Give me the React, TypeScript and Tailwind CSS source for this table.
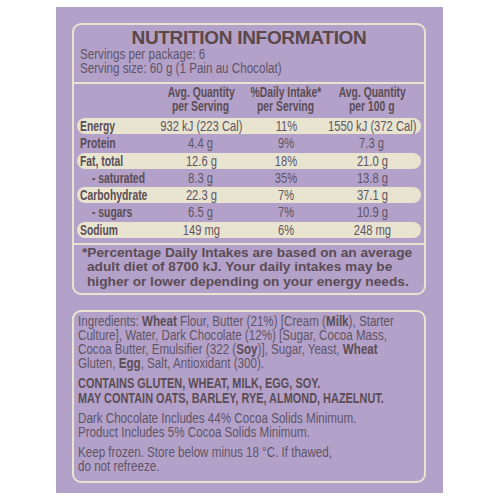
import React from "react";

const sans = { fontFamily: '"Liberation Sans", Arial, sans-serif' };

type Row = { label: string; a: string; b: string; c: string; hl?: boolean; sub?: boolean };
const rows: Row[] = [
  { label: "Energy", a: "932 kJ (223 Cal)", b: "11%", c: "1550 kJ (372 Cal)", hl: true },
  { label: "Protein", a: "4.4 g", b: "9%", c: "7.3 g" },
  { label: "Fat, total", a: "12.6 g", b: "18%", c: "21.0 g", hl: true },
  { label: "- saturated", a: "8.3 g", b: "35%", c: "13.8 g", sub: true },
  { label: "Carbohydrate", a: "22.3 g", b: "7%", c: "37.1 g", hl: true },
  { label: "- sugars", a: "6.5 g", b: "7%", c: "10.9 g", sub: true },
  { label: "Sodium", a: "149 mg", b: "6%", c: "248 mg", hl: true },
];

/* condensed regular text, left aligned */
function NL({ children, className = "" }: { children: React.ReactNode; className?: string }) {
  return (
    <div className={`whitespace-nowrap origin-left scale-x-[0.83] ${className}`}>{children}</div>
  );
}
/* condensed bold text, left aligned */
function BL({ children, className = "" }: { children: React.ReactNode; className?: string }) {
  return (
    <div className={`whitespace-nowrap origin-left scale-x-[0.78] font-bold text-[#5b4d55] ${className}`}>{children}</div>
  );
}
/* centered condensed text */
function NC({ children }: { children: React.ReactNode }) {
  return (
    <div className="flex justify-center">
      <span className="inline-block whitespace-nowrap scale-x-[0.8]">{children}</span>
    </div>
  );
}
function BC({ children }: { children: React.ReactNode }) {
  return (
    <div className="flex justify-center">
      <span className="inline-block whitespace-nowrap scale-x-[0.74] font-bold text-[#5b4d55]">{children}</span>
    </div>
  );
}

const W = ({ children }: { children: React.ReactNode }) => (
  <b className="text-[#5b4d55]">{children}</b>
);

export default function App() {
  return (
    <div className="w-[500px] h-[500px] bg-white pt-[7px] pl-[56px]" style={sans}>
      <div className="w-[387px] h-[486px] bg-[#b4a1c9] pt-[16px] pl-[16px] text-[#5e5566]">
        {/* Nutrition box */}
        <div className="w-[354px] h-[272px] rounded-[9px] border-2 border-[#e9e4cf] overflow-hidden">
          <div className="text-center font-bold text-[19px] leading-[18px] text-[#5b4848] pt-[4px] tracking-[-0.3px]">
            NUTRITION INFORMATION
          </div>
          <div className="pl-[6px] text-[14px] leading-[14px]">
            <NL>Servings per package: 6</NL>
            <NL>Serving size: 60 g (1 Pain au Chocolat)</NL>
          </div>
          <div className="h-[2px] bg-[#e9e4cf] mt-[7px]" />
          <div className="px-[3px]">
            <div className="grid grid-cols-[82px_84px_86px_86px] pt-[2px] text-[14px] leading-[13.5px]">
              <div />
              <div>
                <BC>Avg. Quantity</BC>
                <BC>per Serving</BC>
              </div>
              <div>
                <BC>%Daily Intake*</BC>
                <BC>per Serving</BC>
              </div>
              <div>
                <BC>Avg. Quantity</BC>
                <BC>per 100 g</BC>
              </div>
            </div>
            <div className="mt-[5px] flex flex-col gap-[1.3px]">
              {rows.map((r) => (
                <div
                  key={r.label}
                  className={`grid grid-cols-[82px_84px_86px_86px] h-[16px] items-center rounded-full text-[14px] leading-[16px] ${
                    r.hl ? "bg-[#e8e4d0]" : ""
                  }`}
                >
                  <div className={r.sub ? "pl-[15px]" : "pl-[3px]"}>
                    <span className="inline-block whitespace-nowrap origin-left scale-x-[0.74] font-bold text-[#5b4d55]">
                      {r.label}
                    </span>
                  </div>
                  <NC>{r.a}</NC>
                  <NC>{r.b}</NC>
                  <NC>{r.c}</NC>
                </div>
              ))}
            </div>
          </div>
          <div className="h-[2px] bg-[#e9e4cf] mt-[5px]" />
          <div className="pl-[8px] pt-[1px] font-bold text-[13.7px] leading-[14.5px] text-[#5b4d55] whitespace-nowrap">
            <div>*Percentage Daily Intakes are based on an average</div>
            <div className="pl-[5px]">adult diet of 8700 kJ. Your daily intakes may be</div>
            <div className="pl-[5px]">higher or lower depending on your energy needs.</div>
          </div>
        </div>

        {/* Ingredients box */}
        <div className="mt-[15px] w-[354px] h-[173px] rounded-[9px] border-2 border-[#e9e4cf] pl-[4px] pt-[2px] text-[14px] leading-[14px]">
          <NL>
            Ingredients: <W>Wheat</W> Flour, Butter (21%) [Cream (<W>Milk</W>), Starter
          </NL>
          <NL>Culture], Water, Dark Chocolate (12%) [Sugar, Cocoa Mass,</NL>
          <NL>
            Cocoa Butter, Emulsifier (322 (<W>Soy</W>)], Sugar, Yeast, <W>Wheat</W>
          </NL>
          <NL>
            Gluten, <W>Egg</W>, Salt, Antioxidant (300).
          </NL>
          <div className="mt-[6px] leading-[15px]">
            <BL>CONTAINS GLUTEN, WHEAT, MILK, EGG, SOY.</BL>
            <BL>MAY CONTAIN OATS, BARLEY, RYE, ALMOND, HAZELNUT.</BL>
          </div>
          <div className="mt-[5px]">
            <NL>Dark Chocolate Includes 44% Cocoa Solids Minimum.</NL>
            <NL>Product Includes 5% Cocoa Solids Minimum.</NL>
          </div>
          <div className="mt-[6px]">
            <NL>Keep frozen. Store below minus 18 °C. If thawed,</NL>
            <NL>do not refreeze.</NL>
          </div>
        </div>
      </div>
    </div>
  );
}
